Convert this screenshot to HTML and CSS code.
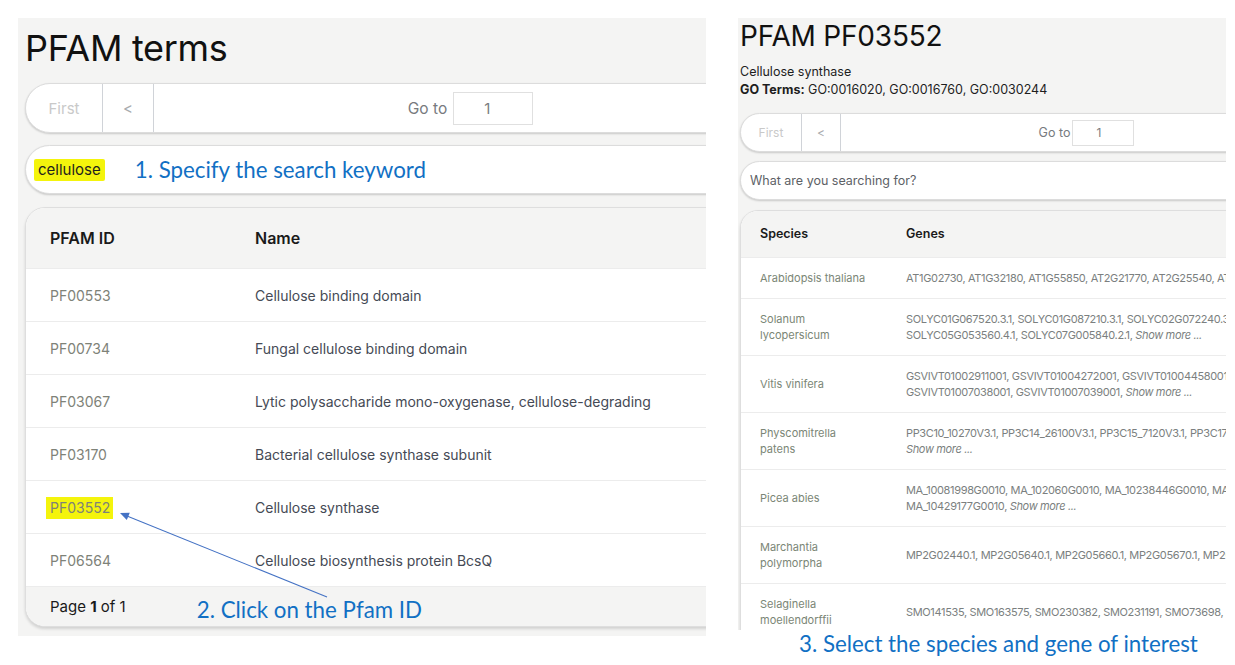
FILE: index.html
```html
<!DOCTYPE html>
<html lang="en">
<head>
<meta charset="utf-8">
<title>PFAM terms</title>
<link rel="stylesheet" href="styles.css">
</head>
<body>
<div class="page">
  <section class="panel panel-left">
    <h1 class="title-lg">PFAM terms</h1>
    <div class="inner">
      <div class="pager pager-lg">
        <span class="pg-btn pg-first">First</span>
        <span class="pg-btn pg-prev">&lt;</span>
        <div class="pg-mid"><span class="pg-goto">Go to</span><span class="pg-input">1</span></div>
      </div>
      <div class="search search-lg">
        <span class="kw">cellulose</span>
        <span class="note note-1">1. Specify the search keyword</span>
      </div>
      <div class="card card-lg">
        <div class="trow thead"><div class="c1">PFAM ID</div><div class="c2">Name</div></div>
        <div class="trow"><div class="c1 pid">PF00553</div><div class="c2 pname">Cellulose binding domain</div></div>
        <div class="trow"><div class="c1 pid">PF00734</div><div class="c2 pname">Fungal cellulose binding domain</div></div>
        <div class="trow"><div class="c1 pid">PF03067</div><div class="c2 pname">Lytic polysaccharide mono-oxygenase, cellulose-degrading</div></div>
        <div class="trow"><div class="c1 pid">PF03170</div><div class="c2 pname">Bacterial cellulose synthase subunit</div></div>
        <div class="trow"><div class="c1 pid"><span class="hl">PF03552</span></div><div class="c2 pname">Cellulose synthase</div></div>
        <div class="trow"><div class="c1 pid">PF06564</div><div class="c2 pname">Cellulose biosynthesis protein BcsQ</div></div>
        <div class="tfoot"><span class="pageinfo">Page <b>1</b> of 1</span><span class="note note-2">2. Click on the Pfam ID</span></div>
      </div>
    </div>
  </section>

  <div class="col-right">
    <section class="panel panel-right">
      <h2 class="title-sm">PFAM PF03552</h2>
      <p class="desc">Cellulose synthase</p>
      <p class="desc"><b>GO Terms:</b> GO:0016020, GO:0016760, GO:0030244</p>
      <div class="inner-sm">
        <div class="pager pager-sm">
          <span class="pg-btn pg-first">First</span>
          <span class="pg-btn pg-prev">&lt;</span>
          <div class="pg-mid"><span class="pg-goto">Go to</span><span class="pg-input">1</span></div>
        </div>
        <div class="search search-sm">
          <span class="placeholder">What are you searching for?</span>
        </div>
        <div class="card card-sm">
          <div class="srow shead"><div class="s1">Species</div><div class="s2">Genes</div></div>
          <div class="srow"><div class="s1 sp">Arabidopsis thaliana</div><div class="s2 genes"><span>AT1G02730, AT1G32180, AT1G55850, AT2G21770, AT2G25540, AT4G18780,</span></div></div>
          <div class="srow"><div class="s1 sp">Solanum lycopersicum</div><div class="s2 genes"><span>SOLYC01G067520.3.1, SOLYC01G087210.3.1, SOLYC02G072240.3.1,</span><span>SOLYC05G053560.4.1, SOLYC07G005840.2.1, <i>Show more ...</i></span></div></div>
          <div class="srow"><div class="s1 sp">Vitis vinifera</div><div class="s2 genes"><span>GSVIVT01002911001, GSVIVT01004272001, GSVIVT01004458001,</span><span>GSVIVT01007038001, GSVIVT01007039001, <i>Show more ...</i></span></div></div>
          <div class="srow"><div class="s1 sp">Physcomitrella patens</div><div class="s2 genes"><span>PP3C10_10270V3.1, PP3C14_26100V3.1, PP3C15_7120V3.1, PP3C17,</span><span><i>Show more ...</i></span></div></div>
          <div class="srow"><div class="s1 sp">Picea abies</div><div class="s2 genes"><span>MA_10081998G0010, MA_102060G0010, MA_10238446G0010, MA_1,</span><span>MA_10429177G0010, <i>Show more ...</i></span></div></div>
          <div class="srow"><div class="s1 sp">Marchantia polymorpha</div><div class="s2 genes"><span>MP2G02440.1, MP2G05640.1, MP2G05660.1, MP2G05670.1, MP2G07440.1,</span></div></div>
          <div class="srow"><div class="s1 sp">Selaginella moellendorffii</div><div class="s2 genes"><span>SMO141535, SMO163575, SMO230382, SMO231191, SMO73698, SMO9,</span></div></div>
        </div>
      </div>
    </section>
    <p class="note note-3">3. Select the species and gene of interest</p>
  </div>

  <svg class="arrow" width="1235" height="665" viewBox="0 0 1235 665" aria-hidden="true">
    <line x1="327" y1="597" x2="127" y2="516" stroke="#4472c4" stroke-width="1.1"/>
    <polygon points="120,513 129.8,512.7 126.8,520.1" fill="#4472c4"/>
  </svg>
</div>
</body>
</html>
```

FILE: styles.css
```css
* { box-sizing: border-box; }

html, body {
  margin: 0;
  padding: 0;
  background: #ffffff;
}

body {
  font-family: Inter, "Noto Sans", sans-serif;
  color: #222;
}

.page {
  position: relative;
  display: flex;
  align-items: flex-start;
  gap: 32px;
  padding: 18px 0 0 18px;
  width: 1235px;
  height: 665px;
  overflow: hidden;
}

.panel {
  background: #f4f4f3;
  overflow: hidden;
}

.panel-left {
  width: 688px;
  height: 618px;
  padding: 5px 0 0 7px;
}

.title-lg {
  margin: 0;
  font-weight: 400;
  font-size: 36px;
  line-height: 50px;
  letter-spacing: -0.3px;
  color: #111;
}

.inner {
  width: 763px;
  margin-top: 10px;
}

/* pager */
.pager {
  display: flex;
  background: #fff;
  border: 1px solid #dcdcdc;
  box-shadow: 0 1px 2px rgba(0, 0, 0, 0.18);
}

.pg-btn {
  display: flex;
  align-items: center;
  justify-content: center;
  border-right: 1px solid #d0d3d8;
  color: #c9c9c9;
}

.pg-prev { color: #a9abae; }

.pg-mid {
  flex: 1;
  display: flex;
  align-items: center;
  justify-content: center;
  gap: 6px;
}

.pg-goto { color: #777a7e; }

.pg-input {
  display: flex;
  align-items: center;
  border: 1px solid #e0e0e0;
  background: #fff;
  color: #7a7d80;
}

.pager-lg {
  height: 50px;
  border-radius: 25px;
  font-size: 15px;
}
.pager-lg .pg-first { width: 77px; }
.pager-lg .pg-prev { width: 51px; }
.pager-lg .pg-goto { font-size: 15.5px; }
.pager-lg .pg-input { width: 80px; height: 33px; padding-left: 30px; }

/* search */
.search {
  display: flex;
  align-items: center;
  background: #fff;
  border: 1px solid #dcdcdc;
  box-shadow: 0 1px 2px rgba(0, 0, 0, 0.18);
}

.search-lg {
  height: 49px;
  margin-top: 12px;
  border-radius: 25px;
  padding-left: 8px;
  font-size: 15px;
}

.kw {
  background: #f4f40c;
  padding: 1px 4px 2px 4px;
  color: #1e1e1e;
  border-radius: 2px;
}

.note {
  font-family: Lato, "Open Sans", sans-serif;
  font-size: 22.3px;
  color: #1170c4;
  margin: 0;
}

.note-1 {
  margin-left: 30px;
  position: relative;
  top: 0;
}

/* left card */
.card {
  background: #fff;
  border: 1px solid #dedede;
  box-shadow: 0 2px 3px rgba(0, 0, 0, 0.14);
  overflow: hidden;
}

.card-lg {
  margin-top: 13px;
  height: 420px;
  border-radius: 20px;
  display: flex;
  flex-direction: column;
}

.trow {
  display: grid;
  grid-template-columns: 205px 1fr;
  align-items: center;
  height: 53px;
  border-top: 1px solid #ececec;
  padding-left: 24px;
  font-size: 14px;
}

.thead {
  height: 60px;
  border-top: none;
  background: #f4f4f3;
  font-size: 16px;
  font-weight: 600;
  color: #1a1a1a;
}

.pid { color: #7e8278; }
.pname { color: #454a55; }

.hl {
  background: #f4f40c;
  padding: 2px 3px 3px 4px;
  margin-left: -4px;
}

.tfoot {
  flex: 1;
  display: flex;
  align-items: center;
  background: #f4f4f3;
  padding-left: 24px;
  font-size: 15px;
  color: #1a1a1a;
  border-top: 1px solid #ececec;
}

.pageinfo b { font-weight: 700; }

.note-2 {
  margin-left: 71px;
  position: relative;
  top: 3px;
}

/* right column */
.col-right {
  width: 488px;
  display: flex;
  flex-direction: column;
}

.panel-right {
  height: 612px;
  padding: 0 0 0 2px;
}

.title-sm {
  margin: 0;
  font-weight: 400;
  font-size: 28px;
  line-height: 36px;
  letter-spacing: -0.2px;
  color: #111;
}

.desc {
  margin: 0;
  font-size: 12.5px;
  line-height: 18px;
  color: #1e1e1e;
}
.title-sm + .desc { margin-top: 9px; }
.desc b { font-weight: 700; }

.inner-sm {
  width: 593px;
  margin-top: 14px;
}

.pager-sm {
  height: 39px;
  border-radius: 20px;
  font-size: 12px;
}
.pager-sm .pg-first { width: 61px; }
.pager-sm .pg-prev { width: 39px; }
.pager-sm .pg-mid { gap: 2px; }
.pager-sm .pg-goto { font-size: 12.5px; }
.pager-sm .pg-input { width: 62px; height: 26px; padding-left: 23px; font-size: 12px; }

.search-sm {
  height: 39px;
  margin-top: 9px;
  border-radius: 20px;
  padding-left: 9px;
  font-size: 12.5px;
}

.placeholder { color: #5d6166; }

.card-sm {
  margin-top: 10px;
  height: 440px;
  border-radius: 18px;
}

.srow {
  display: grid;
  grid-template-columns: 146px 1fr;
  align-items: center;
  border-top: 1px solid #ececec;
  padding: 12px 0 12px 19px;
  font-size: 11px;
  line-height: 16px;
}

.shead {
  height: 46px;
  border-top: none;
  padding: 0 0 0 19px;
  background: #f4f4f3;
  font-size: 12.5px;
  font-weight: 600;
  color: #1a1a1a;
}

.sp {
  color: #7b8676;
  padding-right: 36px;
}

.genes {
  color: #7b7f80;
  display: flex;
  flex-direction: column;
  letter-spacing: -0.35px;
}

.genes span { white-space: nowrap; }
.genes i { font-style: italic; }

.note-3 {
  margin-top: 2px;
  padding-left: 61px;
  line-height: 24px;
  white-space: nowrap;
}

.arrow {
  position: absolute;
  left: 0;
  top: 0;
  pointer-events: none;
}
```
